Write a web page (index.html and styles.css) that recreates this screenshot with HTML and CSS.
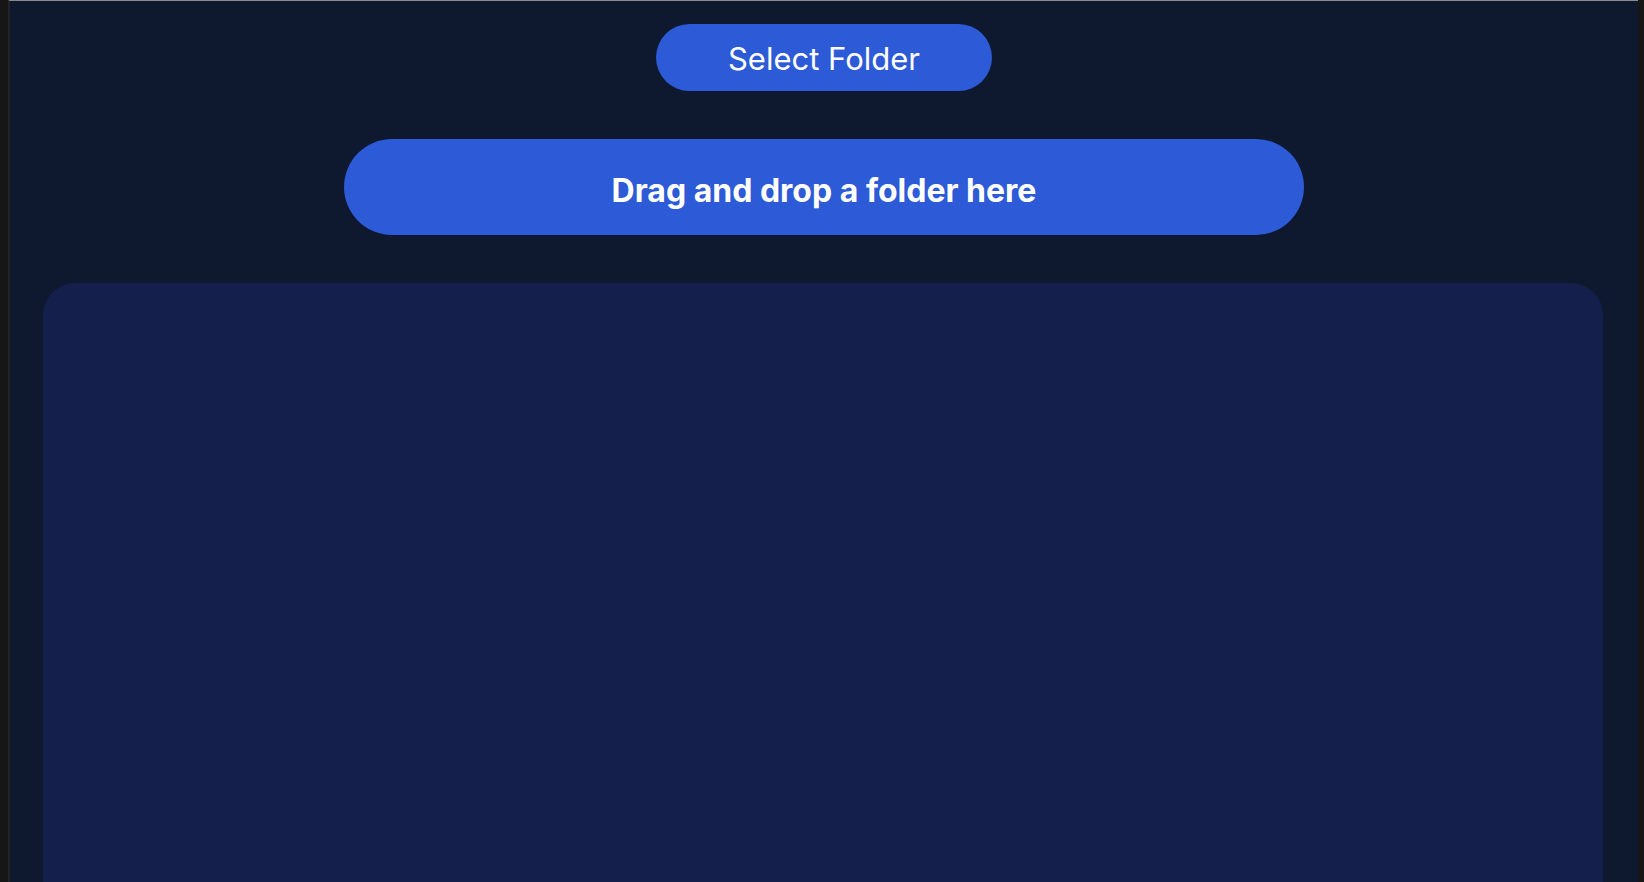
FILE: index.html
```html
<!DOCTYPE html>
<html lang="en">
<head>
<meta charset="utf-8">
<title>Folder Drop</title>
<link rel="stylesheet" href="styles.css">
</head>
<body>
<div class="window">
  <main class="app">
    <button class="select-btn" type="button">Select Folder</button>
    <div class="drop-zone">Drag and drop a folder here</div>
    <section class="panel"></section>
  </main>
</div>
</body>
</html>
```

FILE: styles.css
```css
html, body {
  margin: 0;
  padding: 0;
  height: 100%;
}

body {
  background: #161616;
  font-family: Inter, "Noto Sans", "Liberation Sans", sans-serif;
  overflow: hidden;
}

.window {
  height: 100%;
  margin: 0 6px 0 8px;
  border-top: 1px solid #8a8a8a;
  border-left: 2px solid #232325;
  box-sizing: border-box;
  background: #0e1930;
}

.app {
  height: 100%;
  display: flex;
  flex-direction: column;
  align-items: center;
  padding-top: 23px;
  box-sizing: border-box;
}

.select-btn {
  width: 336px;
  height: 67px;
  border: none;
  border-radius: 34px;
  background: #2d5ad6;
  color: #ffffff;
  font-family: inherit;
  font-size: 31px;
  font-weight: 400;
  padding: 2px 0 0;
  flex-shrink: 0;
}

.drop-zone {
  margin-top: 48px;
  width: 960px;
  height: 96px;
  box-sizing: border-box;
  padding-top: 6px;
  border-radius: 48px;
  background: #2d5ad6;
  color: #ffffff;
  font-size: 32px;
  font-weight: 700;
  display: flex;
  align-items: center;
  justify-content: center;
  flex-shrink: 0;
}

.panel {
  margin-top: 48px;
  align-self: stretch;
  margin-left: 33px;
  margin-right: 35px;
  flex: 1;
  background: #141f4b;
  border-radius: 32px 32px 0 0;
}
```
